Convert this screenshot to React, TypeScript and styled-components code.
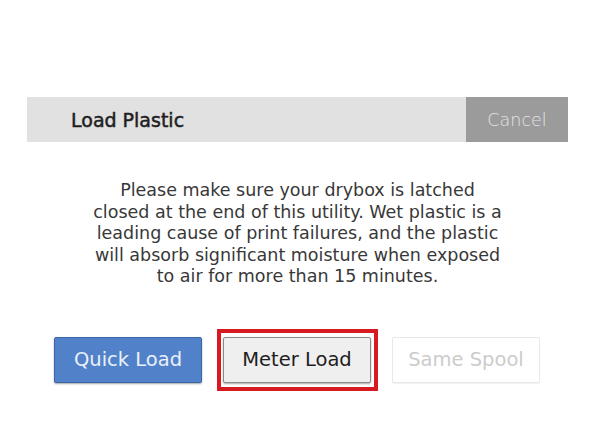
import React from "react";
import styled, { createGlobalStyle } from "styled-components";

const Global = createGlobalStyle`
  html, body { margin: 0; padding: 0; background: #ffffff; }
  body { font-family: "DejaVu Sans", Verdana, sans-serif; }
`;

const Screen = styled.div`
  width: 592px;
  height: 440px;
  box-sizing: border-box;
  padding: 97px 24px 0 27px;
  display: flex;
  flex-direction: column;
`;

const Header = styled.div`
  display: flex;
  align-items: stretch;
  height: 45px;
  background: #e1e1e1;
`;

const Title = styled.div`
  flex: 1;
  display: flex;
  align-items: center;
  padding-left: 44px;
  font-size: 19px;
  font-weight: 400;
  color: #1f1f1f;
  -webkit-text-stroke: 0.5px #1f1f1f;
`;

const CancelButton = styled.div`
  width: 102px;
  display: flex;
  align-items: center;
  justify-content: center;
  background: #9b9b9b;
  color: #e4e4e4;
  font-size: 17.5px;
  font-weight: 200;
`;

const Message = styled.p`
  margin: 38px 0 0 0;
  text-align: center;
  font-size: 17.5px;
  line-height: 21.5px;
  color: #383838;
`;

const ButtonRow = styled.div`
  display: flex;
  align-items: center;
  margin-top: 41px;
  padding-left: 27px;
`;

const Button = styled.div<{ $variant: "primary" | "default" | "disabled" }>`
  box-sizing: border-box;
  width: 148px;
  height: 46px;
  display: flex;
  align-items: center;
  justify-content: center;
  font-size: 19.5px;
  border-radius: 2px;
  background: ${(p) =>
    p.$variant === "primary" ? "#5182c9" : p.$variant === "default" ? "#efefef" : "#ffffff"};
  color: ${(p) =>
    p.$variant === "primary" ? "#eaf0fa" : p.$variant === "default" ? "#1e1e1e" : "#cccccc"};
  border: 1px solid
    ${(p) =>
      p.$variant === "primary" ? "#3a66a6" : p.$variant === "default" ? "#8a8a8a" : "#e8e8e8"};
  box-shadow: ${(p) =>
    p.$variant === "disabled" ? "0 1px 1px rgba(0,0,0,0.06)" : "0 1px 2px rgba(0,0,0,0.35)"};
`;

const Highlight = styled.div`
  box-sizing: border-box;
  padding: 4px 3px 4px 2px;
  border: 4px solid #d71920;
  margin: 0 14px 0 15px;
`;

export default function App() {
  return (
    <>
      <Global />
      <Screen>
        <Header>
          <Title>Load Plastic</Title>
          <CancelButton>Cancel</CancelButton>
        </Header>
        <Message>
          Please make sure your drybox is latched
          <br />
          closed at the end of this utility. Wet plastic is a
          <br />
          leading cause of print failures, and the plastic
          <br />
          will absorb significant moisture when exposed
          <br />
          to air for more than 15 minutes.
        </Message>
        <ButtonRow>
          <Button $variant="primary">Quick Load</Button>
          <Highlight>
            <Button $variant="default">Meter Load</Button>
          </Highlight>
          <Button $variant="disabled">Same Spool</Button>
        </ButtonRow>
      </Screen>
    </>
  );
}
